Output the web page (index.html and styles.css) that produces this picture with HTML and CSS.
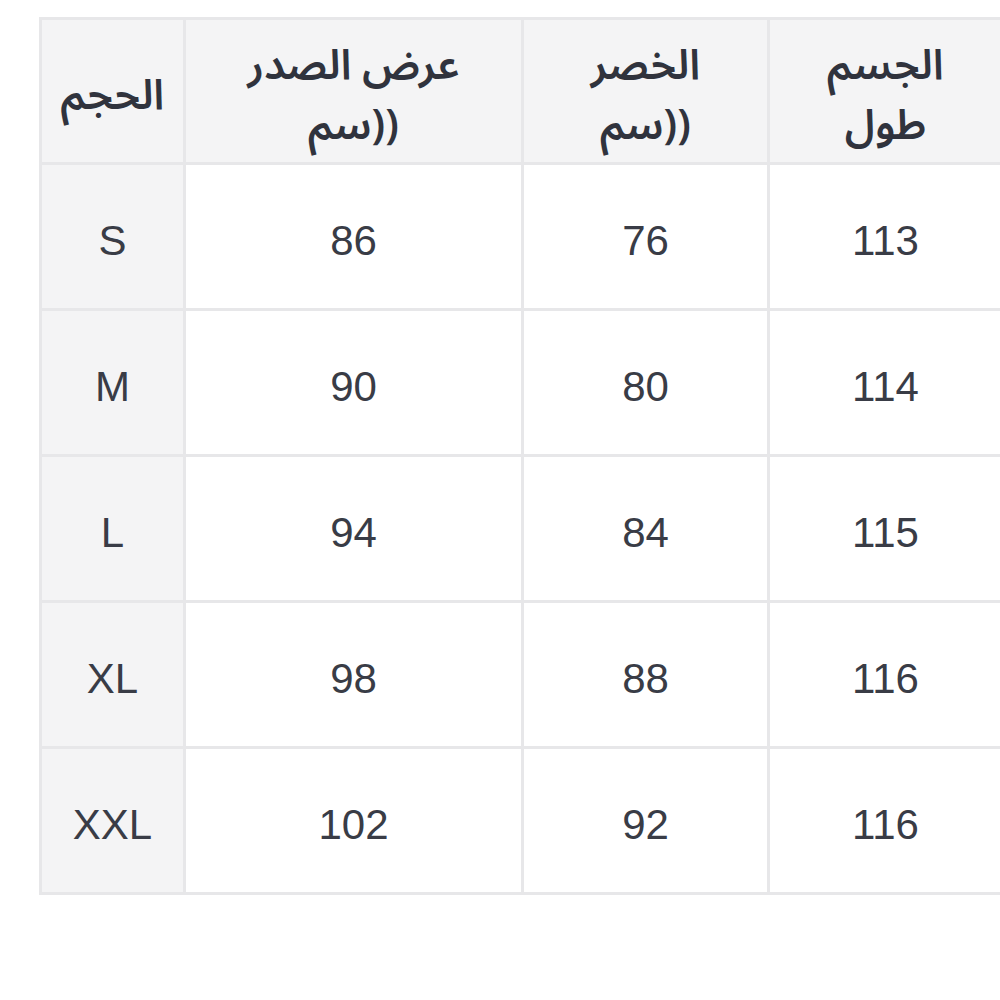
FILE: index.html
```html
<!DOCTYPE html>
<html lang="ar">
<head>
<meta charset="utf-8">
<link rel="stylesheet" href="styles.css">
</head>
<body>
<div class="wrap">
  <div class="table">
    <div class="cell head side" dir="rtl"><span>الحجم</span></div>
    <div class="cell head" dir="rtl"><span>عرض الصدر</span><span>((سم</span></div>
    <div class="cell head" dir="rtl"><span>الخصر</span><span>((سم</span></div>
    <div class="cell head" dir="rtl"><span>الجسم</span><span>طول</span></div>

    <div class="cell side">S</div>
    <div class="cell">86</div>
    <div class="cell">76</div>
    <div class="cell">113</div>

    <div class="cell side">M</div>
    <div class="cell">90</div>
    <div class="cell">80</div>
    <div class="cell">114</div>

    <div class="cell side">L</div>
    <div class="cell">94</div>
    <div class="cell">84</div>
    <div class="cell">115</div>

    <div class="cell side">XL</div>
    <div class="cell">98</div>
    <div class="cell">88</div>
    <div class="cell">116</div>

    <div class="cell side">XXL</div>
    <div class="cell">102</div>
    <div class="cell">92</div>
    <div class="cell">116</div>
  </div>
</div>
</body>
</html>
```

FILE: styles.css
```css
html, body {
  margin: 0;
  padding: 0;
  background: #ffffff;
  overflow: hidden;
}

.wrap {
  padding: 17px 0 0 39px;
}

.table {
  display: grid;
  grid-template-columns: 141px 335px 243px 231px;
  grid-template-rows: 142px repeat(5, 143px);
  gap: 3px;
  padding: 3px;
  background: #e7e7e9;
  width: max-content;
}

.cell {
  background: #ffffff;
  display: flex;
  flex-direction: column;
  align-items: center;
  justify-content: center;
  font-family: "Liberation Sans", Arial, sans-serif;
  font-size: 42px;
  color: #393c46;
  padding-top: 8px;
  box-sizing: border-box;
}

.side,
.head {
  background: #f4f4f5;
}

.head {
  font-family: "Noto Sans Arabic", "DejaVu Sans", sans-serif;
  font-size: 42px;
  font-weight: 600;
  line-height: 60px;
  color: #30333d;
  padding-top: 10px;
}
```
